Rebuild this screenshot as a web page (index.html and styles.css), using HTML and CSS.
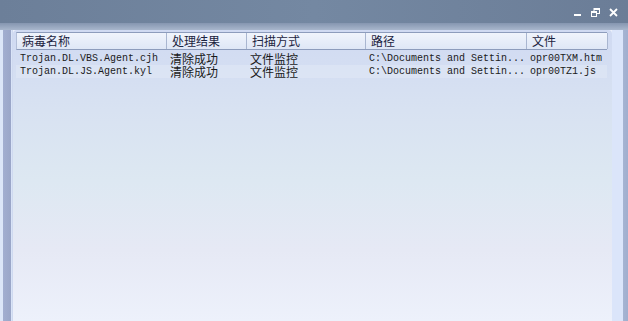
FILE: index.html
```html
<!DOCTYPE html>
<html>
<head>
    <meta charset="UTF-8" />
    <title>病毒列表</title>
    <link rel="stylesheet" href="styles.css">
</head>
<body>
    <div class="titlebar">
        <div class="winbtns">
            <svg width="9" height="9" viewBox="0 0 9 9"><rect x="1" y="6" width="7" height="2" fill="#fff"/></svg>
            <svg width="9" height="9" viewBox="0 0 9 9"><rect x="3" y="0.5" width="5.5" height="5" fill="none" stroke="#fff"/><rect x="0.5" y="3.5" width="5" height="5" fill="#6e8099" stroke="#fff"/><rect x="0.5" y="3.5" width="5" height="1.5" fill="#fff"/><rect x="3" y="0.5" width="5.5" height="1.5" fill="#fff"/></svg>
            <svg width="9" height="9" viewBox="0 0 9 9"><path d="M1 1L8 8M8 1L1 8" stroke="#fff" stroke-width="1.8"/></svg>
        </div>
    </div>
    <div class="band"></div>
    <div class="frame">
        <div class="side left"></div>
        <div class="panel">
            <div class="list">
                <div class="row head">
                    <div class="cell">病毒名称</div>
                    <div class="cell">处理结果</div>
                    <div class="cell">扫描方式</div>
                    <div class="cell">路径</div>
                    <div class="cell">文件</div>
                </div>
                <div class="row item first">
                    <div class="cell mono">Trojan.DL.VBS.Agent.cjh</div>
                    <div class="cell">清除成功</div>
                    <div class="cell">文件监控</div>
                    <div class="cell mono">C:\Documents and Settin...</div>
                    <div class="cell mono">opr00TXM.htm</div>
                </div>
                <div class="row item alt">
                    <div class="cell mono">Trojan.DL.JS.Agent.kyl</div>
                    <div class="cell">清除成功</div>
                    <div class="cell">文件监控</div>
                    <div class="cell mono">C:\Documents and Settin...</div>
                    <div class="cell mono">opr00TZ1.js</div>
                </div>
            </div>
        </div>
        <div class="side right"></div>
    </div>
</body>
</html>
```

FILE: styles.css
```css
body {
    margin: 0;
    height: 321px;
    overflow: hidden;
    font-family: "Noto Sans CJK SC", sans-serif;
    font-size: 12px;
    color: #1a1a1a;
    background: #edf1fb;
}

.titlebar {
    height: 23px;
    background: linear-gradient(to right, #6c7f99, #7488a2 50%, #6b7d97);
    display: flex;
    justify-content: flex-end;
    align-items: center;
}

.winbtns {
    display: flex;
    gap: 9px;
    padding-right: 10px;
    margin-top: 1px;
}

.band {
    height: 7px;
    background: linear-gradient(to bottom, #8596b0, #a8b6cc);
}

.frame {
    display: flex;
    height: 291px;
}

.side.left {
    width: 13px;
    background: linear-gradient(to right, #dce6f8 0, #dce6f8 3px, #a2aed0 3px, #9aa6c8 11px, #dfe9fb 11px, #c9d4ec 13px);
}

.side.right {
    width: 16px;
    background: linear-gradient(to right, #dbe5fa 0, #dbe5fa 11px, #a6b4d2 11px, #a0aece 16px);
}

.panel {
    flex: 1;
    padding: 2px 0 0 3px;
    background: linear-gradient(to bottom, #d0daf2 0, #d8e2f2 80px, #dde8f2 150px, #e6e9f5 220px, #edf1fb 291px);
    border-top-left-radius: 4px;
    border-top-right-radius: 4px;
}

.list {
    width: 591px;
}

.row {
    display: grid;
    grid-template-columns: 150px 80px 119px 161px 81px;
}

.head {
    height: 16px;
    background: linear-gradient(to bottom, #f0f4fc, #dfe7f6);
    border-top: 1px solid #8d9cbc;
    border-bottom: 1px solid #8d9cbc;
    border-left: 1px solid #b3bfd8;
}

.head .cell {
    line-height: 16px;
    padding-left: 5px;
    border-right: 1px solid #a9b6d0;
    color: #1c2440;
}

.item {
    height: 13px;
}

.item.first {
    margin-top: 2px;
}

.item.alt {
    background: rgba(255, 255, 255, 0.18);
}

.item .cell {
    line-height: 13px;
    padding-left: 4px;
    white-space: nowrap;
}

.item .cell.mono {
    font-family: "Liberation Mono", monospace;
    font-size: 10px;
    overflow: hidden;
}
```
